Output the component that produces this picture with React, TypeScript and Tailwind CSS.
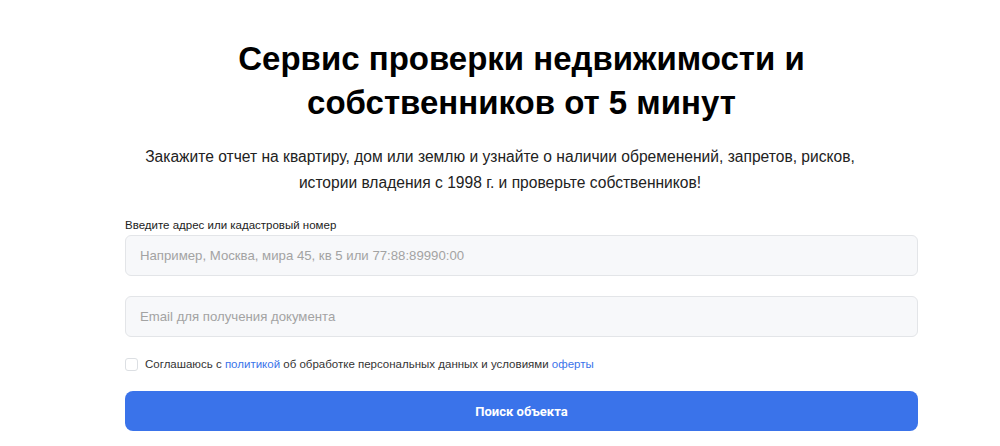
import { useState } from 'react';

export default function App() {
  const [agree, setAgree] = useState(false);

  return (
    <div className="min-h-[446px] w-full bg-white font-['Liberation_Sans'] text-[#111]">
      {/* heading */}
      <div className="ml-[125px] w-[793px] pt-[37px] text-center">
        <h1 className="text-[33px] font-bold leading-[44px] text-black">
          Сервис проверки недвижимости и
          <br />
          собственников от 5 минут
        </h1>
      </div>

      <p className="mt-[19px] text-center text-[15.6px] leading-[26px] text-[#222]">
        Закажите отчет на квартиру, дом или землю и узнайте о наличии обременений, запретов, рисков,
        <br />
        истории владения с 1998 г. и проверьте собственников!
      </p>

      {/* form */}
      <form className="ml-[125px] mt-[22px] flex w-[793px] flex-col" onSubmit={e => e.preventDefault()}>
        <label className="mb-[3px] text-[11.5px] leading-[14px] text-[#222]">
          Введите адрес или кадастровый номер
        </label>
        <input
          type="text"
          placeholder="Например, Москва, мира 45, кв 5 или 77:88:89990:00"
          className="h-[41px] rounded-[6px] border border-[#e3e5e8] bg-[#f7f8fa] px-[14px] text-[13.2px] outline-none placeholder:text-[#a3a3a3]"
        />
        <input
          type="email"
          placeholder="Email для получения документа"
          className="mt-[20px] h-[41px] rounded-[6px] border border-[#e3e5e8] bg-[#f7f8fa] px-[14px] text-[13.2px] outline-none placeholder:text-[#a3a3a3]"
        />

        <label className="mt-[19px] flex items-center gap-[7px] text-[11.5px] text-[#333]">
          <input
            type="checkbox"
            checked={agree}
            onChange={() => setAgree(!agree)}
            className="m-0 h-[13px] w-[13px] appearance-none rounded-[3px] border border-[#dcdfe3] bg-white"
          />
          <span>
            Соглашаюсь с <a className="text-[#3a73ea]">политикой</a> об обработке персональных данных и условиями{' '}
            <a className="text-[#3a73ea]">оферты</a>
          </span>
        </label>

        <button
          type="submit"
          className="mt-[18px] h-[40px] rounded-[8px] bg-[#3a73ea] font-['Roboto'] text-[13px] font-bold text-white"
        >
          Поиск объекта
        </button>
      </form>
    </div>
  );
}
